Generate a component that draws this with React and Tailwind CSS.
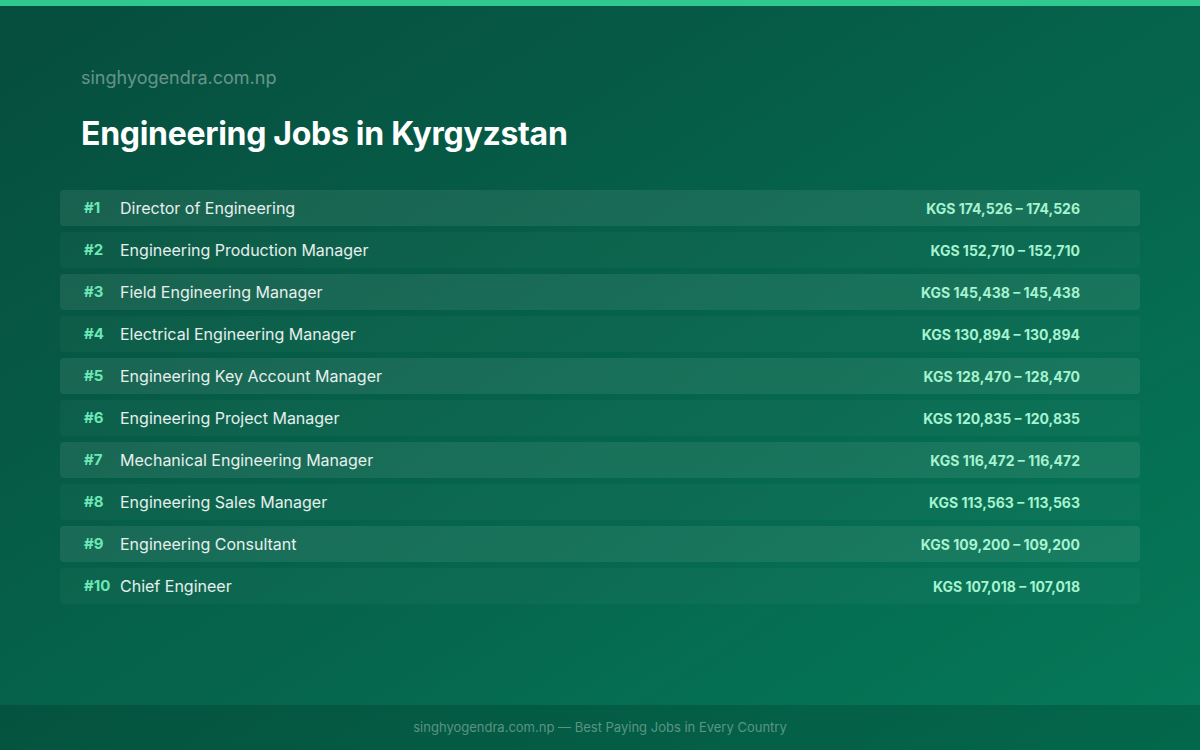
const rows = [
  ["Director of Engineering", "KGS 174,526 – 174,526"],
  ["Engineering Production Manager", "KGS 152,710 – 152,710"],
  ["Field Engineering Manager", "KGS 145,438 – 145,438"],
  ["Electrical Engineering Manager", "KGS 130,894 – 130,894"],
  ["Engineering Key Account Manager", "KGS 128,470 – 128,470"],
  ["Engineering Project Manager", "KGS 120,835 – 120,835"],
  ["Mechanical Engineering Manager", "KGS 116,472 – 116,472"],
  ["Engineering Sales Manager", "KGS 113,563 – 113,563"],
  ["Engineering Consultant", "KGS 109,200 – 109,200"],
  ["Chief Engineer", "KGS 107,018 – 107,018"],
];

export default function App() {
  return (
    <div className="w-[1200px] h-[750px] flex flex-col bg-gradient-to-br from-[#064d3d] to-[#047a59] font-[Inter,sans-serif] overflow-hidden">
      <div className="h-[6px] bg-[#2fc98f]" />
      <div className="flex-1 flex flex-col px-[60px]">
        <div className="px-[21px] pt-[60px] text-[18px] leading-[24px] text-white/40">singhyogendra.com.np</div>
        <h1 className="px-[21px] mt-[24px] text-[32px] leading-[40px] font-bold text-white tracking-[-0.3px]">Engineering Jobs in Kyrgyzstan</h1>
        <div className="mt-[36px] flex flex-col gap-[6px]">
          {rows.map(([t, s], i) => (
            <div key={i} className={`h-[36px] rounded-[4px] flex items-center pl-[24px] pr-[60px] ${i % 2 === 0 ? "bg-white/[0.08]" : "bg-white/[0.03]"}`}>
              <span className="w-[36px] text-[15px] font-bold text-[#6ee7b7]">#{i + 1}</span>
              <span className="flex-1 text-[16px] text-white/90">{t}</span>
              <span className="text-[14px] font-bold text-[#a7f3d0]">{s}</span>
            </div>
          ))}
        </div>
      </div>
      <div className="h-[45px] bg-black/15 flex items-center justify-center text-[13px] text-white/35">
        singhyogendra.com.np — Best Paying Jobs in Every Country
      </div>
    </div>
  );
}
